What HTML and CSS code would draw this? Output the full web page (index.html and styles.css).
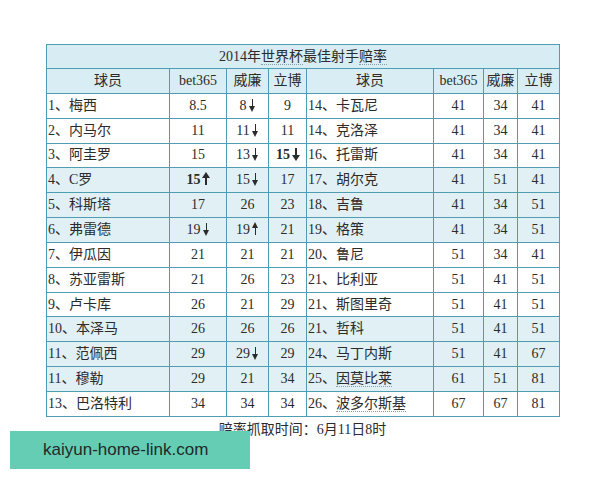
FILE: index.html
```html
<!DOCTYPE html>
<html>
<head>
<meta charset="utf-8">
<link rel="stylesheet" href="styles.css">
</head>
<body>
<div class="page">
  <table class="odds">
    <colgroup>
      <col class="c-name"><col class="c-b"><col class="c-w"><col class="c-l">
      <col class="c-name2"><col class="c-b2"><col class="c-w2"><col class="c-l2">
    </colgroup>
    <tr class="title"><td colspan="8">2014年<span class="dot">世界杯</span>最佳射手<span class="dot">赔率</span></td></tr>
    <tr class="head"><td>球员</td><td>bet365</td><td>威廉</td><td>立博</td><td>球员</td><td>bet365</td><td>威廉</td><td>立博</td></tr>
    <tr class="w"><td class="n">1、梅西</td><td>8.5</td><td>8<i class="dn"></i></td><td>9</td><td class="n">14、卡瓦尼</td><td>41</td><td>34</td><td>41</td></tr>
    <tr class="w"><td class="n">2、内马尔</td><td>11</td><td>11<i class="dn"></i></td><td>11</td><td class="n">14、克洛泽</td><td>41</td><td>34</td><td>41</td></tr>
    <tr class="w"><td class="n">3、阿圭罗</td><td>15</td><td>13<i class="dn"></i></td><td><b>15<i class="dn bold"></i></b></td><td class="n">16、托雷斯</td><td>41</td><td>34</td><td>41</td></tr>
    <tr class="b"><td class="n">4、C罗</td><td><b>15<i class="up bold"></i></b></td><td>15<i class="dn"></i></td><td>17</td><td class="n">17、胡尔克</td><td>41</td><td>51</td><td>41</td></tr>
    <tr class="b"><td class="n">5、科斯塔</td><td>17</td><td>26</td><td>23</td><td class="n">18、吉鲁</td><td>41</td><td>34</td><td>51</td></tr>
    <tr class="b"><td class="n">6、弗雷德</td><td>19<i class="dn"></i></td><td>19<i class="up"></i></td><td>21</td><td class="n">19、格策</td><td>41</td><td>34</td><td>51</td></tr>
    <tr class="w"><td class="n">7、伊瓜因</td><td>21</td><td>21</td><td>21</td><td class="n">20、鲁尼</td><td>51</td><td>34</td><td>41</td></tr>
    <tr class="w"><td class="n">8、苏亚雷斯</td><td>21</td><td>26</td><td>23</td><td class="n">21、比利亚</td><td>51</td><td>41</td><td>51</td></tr>
    <tr class="w"><td class="n">9、卢卡库</td><td>26</td><td>21</td><td>29</td><td class="n">21、斯图里奇</td><td>51</td><td>41</td><td>51</td></tr>
    <tr class="b"><td class="n">10、本泽马</td><td>26</td><td>26</td><td>26</td><td class="n">21、哲科</td><td>51</td><td>41</td><td>51</td></tr>
    <tr class="b"><td class="n">11、范佩西</td><td>29</td><td>29<i class="dn"></i></td><td>29</td><td class="n">24、马丁内斯</td><td>51</td><td>41</td><td>67</td></tr>
    <tr class="b"><td class="n">11、穆勒</td><td>29</td><td>21</td><td>34</td><td class="n">25、<span class="dot">因莫比莱</span></td><td>61</td><td>51</td><td>81</td></tr>
    <tr class="w"><td class="n">13、巴洛特利</td><td>34</td><td>34</td><td>34</td><td class="n">26、<span class="dot">波多尔斯基</span></td><td>67</td><td>67</td><td>81</td></tr>
  </table>
  <p class="note">赔率抓取时间：6月11日8时</p>
</div>
<div class="banner">kaiyun-home-link.com</div>
</body>
</html>
```
FILE: styles.css
```css
html, body {
  margin: 0;
  padding: 0;
  background: #ffffff;
}
.page {
  padding: 44px 0 0 46px;
  width: 513px;
}
.odds {
  border-collapse: collapse;
  table-layout: fixed;
  width: 513px;
  font-family: "Liberation Serif", "Noto Sans CJK SC", serif;
  font-size: 14px;
  color: #2b2b2b;
  border: 1px solid #3f8fa2;
}
.c-name { width: 123px; }
.c-b { width: 57px; }
.c-w { width: 42px; }
.c-l { width: 38px; }
.c-name2 { width: 127px; }
.c-b2 { width: 50px; }
.c-w2 { width: 34px; }
.c-l2 { width: 42px; }
.odds td {
  border: 1px solid #4f9db0;
  text-align: center;
  padding: 0;
  height: 23.85px;
  line-height: 16px;
  white-space: nowrap;
  overflow: hidden;
}
.odds td.n {
  text-align: left;
  padding-left: 1px;
}
.odds .title td {
  height: 23px;
  background: #d7edf3;
}
.odds .head td {
  background: #d9eef4;
}
.odds .b td {
  background: #e1f0f4;
}
.odds .w td {
  background: #ffffff;
}
.odds b {
  font-weight: bold;
}
.dot {
  border-bottom: 1px dotted #8aa0a8;
}
i.dn, i.up {
  display: inline-block;
  width: 7px;
  height: 14px;
  margin-left: 2px;
  vertical-align: -2px;
  position: relative;
}
i.dn::before, i.up::before {
  content: "";
  position: absolute;
  left: 3px;
  width: 1.3px;
  background: #2b2b2b;
}
i.dn::before { top: 1px; height: 8px; }
i.up::before { bottom: 1px; height: 8px; }
i.dn::after, i.up::after {
  content: "";
  position: absolute;
  left: 0;
  border-left: 3.6px solid transparent;
  border-right: 3.6px solid transparent;
}
i.dn::after { top: 8px; border-top: 6px solid #2b2b2b; }
i.up::after { top: 0; border-bottom: 6px solid #2b2b2b; }
i.bold::before { width: 2.4px; left: 2.5px; }
i.bold::after { border-left-width: 4px; border-right-width: 4px; left: -0.3px; }
.note {
  margin: 5px 0 0 0;
  text-align: center;
  font-family: "Liberation Serif", "Noto Sans CJK SC", serif;
  font-size: 14px;
  color: #2b2b2b;
  line-height: 16px;
}
.banner {
  position: absolute;
  left: 10px;
  top: 431px;
  width: 240px;
  height: 38px;
  background: #66cdb5;
  color: #1f2a28;
  font-family: "Liberation Sans", Arial, sans-serif;
  font-size: 17px;
  line-height: 38px;
  padding-left: 33px;
  box-sizing: border-box;
}
```
